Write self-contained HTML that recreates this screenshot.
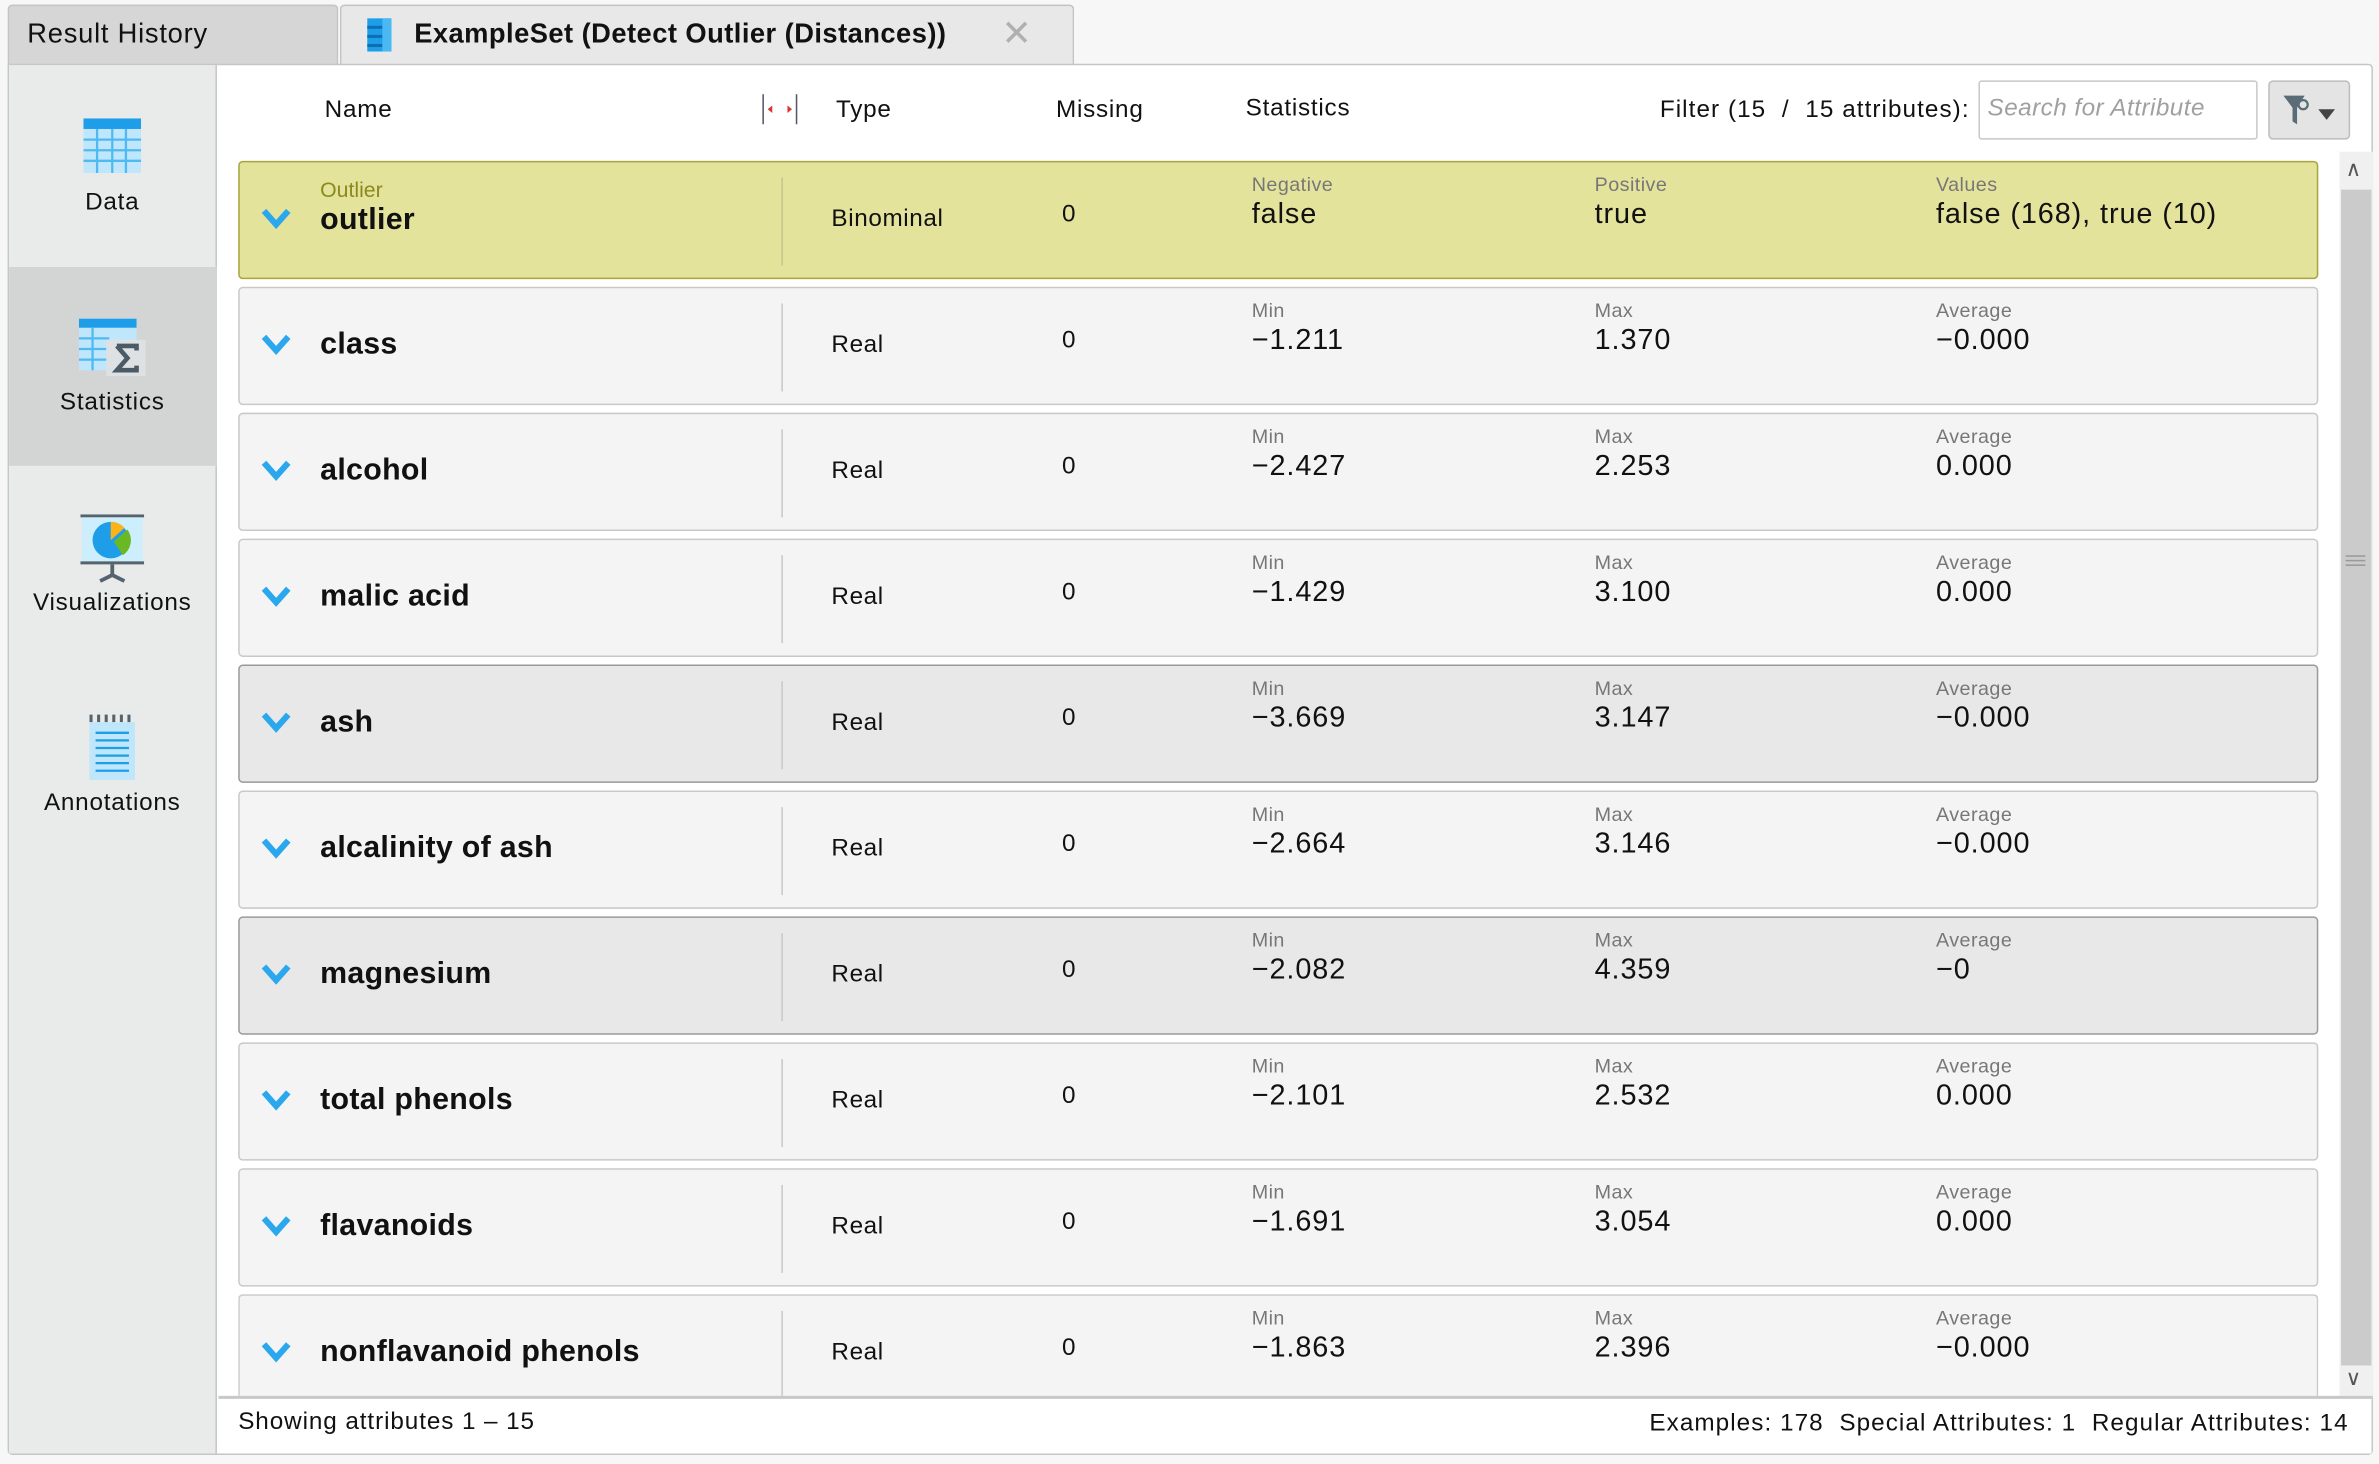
<!DOCTYPE html>
<html><head><meta charset="utf-8"><style>
*{box-sizing:border-box;margin:0;padding:0}
html,body{width:2379px;height:1464px;overflow:hidden;background:#f7f7f7;font-family:"Liberation Sans","DejaVu Sans",sans-serif;color:#111}
#s{position:absolute;left:0;top:0;width:1568px;height:965px;transform:scale(1.51722);transform-origin:0 0}
.a{position:absolute;white-space:nowrap}
.ls{letter-spacing:0.5px}
.row{position:absolute;left:157px;width:1371px;height:78px;background:#f4f4f4;border:1px solid #c9c9c9;border-radius:3px}
.row.d{background:#e8e8e8;border-color:#9a9a9a}
.row .chev{position:absolute;left:14px;top:30px}
.row .nm{position:absolute;left:53px;top:26px;font-size:20px;font-weight:bold;letter-spacing:0.2px}
.row .sep{position:absolute;left:357px;top:10px;width:1px;height:58px;background:#c8c8c8}
.row .ty{position:absolute;left:390px;top:29px;font-size:16px;letter-spacing:0.4px}
.row .mi{position:absolute;left:542px;top:26px;font-size:16px}
.row .l{position:absolute;top:7px;font-size:13px;color:#777;letter-spacing:0.3px}
.row .v{position:absolute;top:24px;font-size:19px;letter-spacing:0.6px}
</style></head><body><div id="s">
<div class="a" style="left:5px;top:3px;width:218px;height:40px;background:#d6d6d6;border:1px solid #c4c4c4;border-bottom:none;border-radius:3px 3px 0 0"></div>
<div class="a ls" style="left:18px;top:12px;font-size:18px">Result History</div>
<div class="a" style="left:224px;top:3px;width:484px;height:40px;background:#e8e8e8;border:1px solid #c4c4c4;border-bottom:none;border-radius:3px 3px 0 0"></div>
<svg class="a" style="left:242px;top:12px" width="16" height="22"><rect x="0" y="0" width="16" height="22" fill="#1e9ee8"/><rect x="0" y="5" width="10" height="2" fill="#0d6fb0"/><rect x="0" y="11" width="10" height="2" fill="#0d6fb0"/><rect x="0" y="17" width="10" height="2" fill="#0d6fb0"/><rect x="10" y="0" width="6" height="22" fill="#49b8f3"/></svg>
<div class="a" style="left:273px;top:12px;font-size:18px;font-weight:bold;letter-spacing:0.3px">ExampleSet (Detect Outlier (Distances))</div>
<div class="a" style="left:660px;top:8px;font-size:24px;color:#b0b0b0">✕</div>
<div class="a" style="left:5px;top:42px;width:1559px;height:917px;background:#fff;border:1px solid #c6c6c6;border-radius:0 3px 3px 3px"></div>
<div class="a" style="left:6px;top:43px;width:137px;height:915px;background:#e9eaea;border-right:1px solid #c6c6c6"></div>
<div class="a" style="left:6px;top:176px;width:137px;height:131px;background:#d3d4d4"></div>
<svg class="a" style="left:55px;top:78px" width="38" height="36"><rect width="38" height="36" fill="#bfe6fb"/><rect width="38" height="7" fill="#1e9ee8"/><g stroke="#4fbaf2" stroke-width="1.5"><line x1="0" y1="14" x2="38" y2="14"/><line x1="0" y1="21" x2="38" y2="21"/><line x1="0" y1="28" x2="38" y2="28"/><line x1="9" y1="7" x2="9" y2="36"/><line x1="19" y1="7" x2="19" y2="36"/><line x1="28" y1="7" x2="28" y2="36"/></g></svg>
<div class="a ls" style="left:0;width:148px;text-align:center;top:125px;font-size:16px">Data</div>
<svg class="a" style="left:52px;top:210px" width="44" height="38"><rect width="38" height="34" fill="#bfe6fb"/><rect width="38" height="6" fill="#1e9ee8"/><g stroke="#4fbaf2" stroke-width="1.5"><line x1="0" y1="13" x2="20" y2="13"/><line x1="0" y1="20" x2="20" y2="20"/><line x1="0" y1="27" x2="20" y2="27"/><line x1="9" y1="6" x2="9" y2="34"/></g><rect x="18" y="14" width="26" height="24" fill="#dde1e3"/><path d="M25 18 H38 V21 M25 18 L32 26 L25 34 H38 V31" stroke="#4a5a66" stroke-width="3" fill="none"/></svg>
<div class="a ls" style="left:0;width:148px;text-align:center;top:257px;font-size:16px">Statistics</div>
<svg class="a" style="left:53px;top:339px" width="42" height="45"><line x1="0" y1="1" x2="42" y2="1" stroke="#55636c" stroke-width="2"/><rect x="1" y="2" width="40" height="30" fill="#cdeefc"/><line x1="0" y1="32" x2="42" y2="32" stroke="#55636c" stroke-width="2"/><circle cx="20" cy="17" r="12" fill="#1e9ee8"/><path d="M20 17 L20 5 A12 12 0 0 1 29 9 Z" fill="#fbb315"/><path d="M22 18 L31 10 A12 12 0 0 1 28 27 Z" fill="#6ab824"/><path d="M21 33 V40 M13 44 L21 40 L29 44" stroke="#55636c" stroke-width="2.5" fill="none"/></svg>
<div class="a ls" style="left:0;width:148px;text-align:center;top:389px;font-size:16px">Visualizations</div>
<svg class="a" style="left:59px;top:470px" width="30" height="45"><g fill="#55636c"><rect x="0" y="1" width="2" height="5"/><rect x="5" y="1" width="2" height="5"/><rect x="10" y="1" width="2" height="5"/><rect x="15" y="1" width="2" height="5"/><rect x="20" y="1" width="2" height="5"/><rect x="25" y="1" width="2" height="5"/></g><rect x="0" y="6" width="30" height="38" fill="#bfe6fb"/><g stroke="#1e9ee8" stroke-width="1.5"><line x1="4" y1="13" x2="26" y2="13"/><line x1="4" y1="18" x2="26" y2="18"/><line x1="4" y1="23" x2="26" y2="23"/><line x1="4" y1="28" x2="26" y2="28"/><line x1="4" y1="33" x2="26" y2="33"/><line x1="4" y1="38" x2="26" y2="38"/></g></svg>
<div class="a ls" style="left:0;width:148px;text-align:center;top:521px;font-size:16px">Annotations</div>
<div class="a ls" style="left:214px;top:64px;font-size:16px">Name</div>
<svg class="a" style="left:502px;top:62px" width="24" height="20"><line x1="1" y1="0" x2="1" y2="20" stroke="#556" stroke-width="1"/><line x1="23" y1="0" x2="23" y2="20" stroke="#556" stroke-width="1"/><path d="M4 10 L7 7.5 V12.5Z M20 10 L17 7.5 V12.5Z" fill="#d33"/></svg>
<div class="a ls" style="left:551px;top:64px;font-size:16px">Type</div>
<div class="a ls" style="left:696px;top:64px;font-size:16px">Missing</div>
<div class="a ls" style="left:821px;top:63px;font-size:16px">Statistics</div>
<div class="a" style="left:1094px;top:64px;font-size:16px;letter-spacing:0.7px">Filter (15&nbsp; / &nbsp;15 attributes):</div>
<div class="a" style="left:1304px;top:53px;width:184px;height:39px;border:1px solid #c8c8c8;border-radius:2px;background:#fff"></div>
<div class="a" style="left:1310px;top:63px;font-size:16px;font-style:italic;color:#a0a0a0;letter-spacing:0.3px">Search for Attribute</div>
<div class="a" style="left:1495px;top:53px;width:54px;height:39px;border:1px solid #bdbdbd;border-radius:3px;background:#e4e4e4"></div>
<svg class="a" style="left:1503px;top:62px" width="40" height="22"><path d="M2 1 H16 L11 9 V20 L8 18 V9 Z" fill="#5a6c78"/><circle cx="15" cy="7" r="3" fill="none" stroke="#5a6c78" stroke-width="1.5"/><path d="M25 10 H36 L30.5 17Z" fill="#444"/></svg>
<div class="a" style="left:1542px;top:100px;width:22px;height:820px;background:#f0f0f0"></div>
<div class="a" style="left:1543px;top:125px;width:20px;height:775px;background:#cbcbcb"></div>
<div class="a" style="left:1546px;top:103px;font-size:14px;color:#555">∧</div>
<div class="a" style="left:1546px;top:900px;font-size:14px;color:#555">∨</div>
<div class="a" style="left:1546px;top:366px;width:13px;height:1px;background:#999;box-shadow:0 3px #999,0 6px #999"></div>
<div class="row" style="top:106px;background:#e4e39c;border-color:#a9a53a;border-width:1.5px">
 <svg class="chev" width="20" height="14"><path d="M2 2 L10 11 L18 2" stroke="#2ba7ee" stroke-width="4" fill="none"/></svg>
 <div class="a" style="left:53px;top:10px;font-size:14px;color:#8a8a1c">Outlier</div>
 <div class="nm" style="top:27px">outlier</div><div class="sep" style="background:#c8c68a"></div>
 <div class="ty">Binominal</div><div class="mi">0</div>
 <div class="l" style="left:667px">Negative</div><div class="v" style="left:667px">false</div>
 <div class="l" style="left:893px">Positive</div><div class="v" style="left:893px">true</div>
 <div class="l" style="left:1118px">Values</div><div class="v" style="left:1118px">false (168), true (10)</div>
</div>
<div class="row" style="top:189px"><svg class="chev" width="20" height="14"><path d="M2 2 L10 11 L18 2" stroke="#2ba7ee" stroke-width="4" fill="none"/></svg><div class="nm">class</div><div class="sep"></div><div class="ty">Real</div><div class="mi">0</div><div class="l" style="left:667px">Min</div><div class="v" style="left:667px">−1.211</div><div class="l" style="left:893px">Max</div><div class="v" style="left:893px">1.370</div><div class="l" style="left:1118px">Average</div><div class="v" style="left:1118px">−0.000</div></div>
<div class="row" style="top:272px"><svg class="chev" width="20" height="14"><path d="M2 2 L10 11 L18 2" stroke="#2ba7ee" stroke-width="4" fill="none"/></svg><div class="nm">alcohol</div><div class="sep"></div><div class="ty">Real</div><div class="mi">0</div><div class="l" style="left:667px">Min</div><div class="v" style="left:667px">−2.427</div><div class="l" style="left:893px">Max</div><div class="v" style="left:893px">2.253</div><div class="l" style="left:1118px">Average</div><div class="v" style="left:1118px">0.000</div></div>
<div class="row" style="top:355px"><svg class="chev" width="20" height="14"><path d="M2 2 L10 11 L18 2" stroke="#2ba7ee" stroke-width="4" fill="none"/></svg><div class="nm">malic acid</div><div class="sep"></div><div class="ty">Real</div><div class="mi">0</div><div class="l" style="left:667px">Min</div><div class="v" style="left:667px">−1.429</div><div class="l" style="left:893px">Max</div><div class="v" style="left:893px">3.100</div><div class="l" style="left:1118px">Average</div><div class="v" style="left:1118px">0.000</div></div>
<div class="row d" style="top:438px"><svg class="chev" width="20" height="14"><path d="M2 2 L10 11 L18 2" stroke="#2ba7ee" stroke-width="4" fill="none"/></svg><div class="nm">ash</div><div class="sep"></div><div class="ty">Real</div><div class="mi">0</div><div class="l" style="left:667px">Min</div><div class="v" style="left:667px">−3.669</div><div class="l" style="left:893px">Max</div><div class="v" style="left:893px">3.147</div><div class="l" style="left:1118px">Average</div><div class="v" style="left:1118px">−0.000</div></div>
<div class="row" style="top:521px"><svg class="chev" width="20" height="14"><path d="M2 2 L10 11 L18 2" stroke="#2ba7ee" stroke-width="4" fill="none"/></svg><div class="nm">alcalinity of ash</div><div class="sep"></div><div class="ty">Real</div><div class="mi">0</div><div class="l" style="left:667px">Min</div><div class="v" style="left:667px">−2.664</div><div class="l" style="left:893px">Max</div><div class="v" style="left:893px">3.146</div><div class="l" style="left:1118px">Average</div><div class="v" style="left:1118px">−0.000</div></div>
<div class="row d" style="top:604px"><svg class="chev" width="20" height="14"><path d="M2 2 L10 11 L18 2" stroke="#2ba7ee" stroke-width="4" fill="none"/></svg><div class="nm">magnesium</div><div class="sep"></div><div class="ty">Real</div><div class="mi">0</div><div class="l" style="left:667px">Min</div><div class="v" style="left:667px">−2.082</div><div class="l" style="left:893px">Max</div><div class="v" style="left:893px">4.359</div><div class="l" style="left:1118px">Average</div><div class="v" style="left:1118px">−0</div></div>
<div class="row" style="top:687px"><svg class="chev" width="20" height="14"><path d="M2 2 L10 11 L18 2" stroke="#2ba7ee" stroke-width="4" fill="none"/></svg><div class="nm">total phenols</div><div class="sep"></div><div class="ty">Real</div><div class="mi">0</div><div class="l" style="left:667px">Min</div><div class="v" style="left:667px">−2.101</div><div class="l" style="left:893px">Max</div><div class="v" style="left:893px">2.532</div><div class="l" style="left:1118px">Average</div><div class="v" style="left:1118px">0.000</div></div>
<div class="row" style="top:770px"><svg class="chev" width="20" height="14"><path d="M2 2 L10 11 L18 2" stroke="#2ba7ee" stroke-width="4" fill="none"/></svg><div class="nm">flavanoids</div><div class="sep"></div><div class="ty">Real</div><div class="mi">0</div><div class="l" style="left:667px">Min</div><div class="v" style="left:667px">−1.691</div><div class="l" style="left:893px">Max</div><div class="v" style="left:893px">3.054</div><div class="l" style="left:1118px">Average</div><div class="v" style="left:1118px">0.000</div></div>
<div class="row" style="top:853px;height:70px;border-bottom:none;border-radius:3px 3px 0 0"><svg class="chev" width="20" height="14"><path d="M2 2 L10 11 L18 2" stroke="#2ba7ee" stroke-width="4" fill="none"/></svg><div class="nm">nonflavanoid phenols</div><div class="sep"></div><div class="ty">Real</div><div class="mi">0</div><div class="l" style="left:667px">Min</div><div class="v" style="left:667px">−1.863</div><div class="l" style="left:893px">Max</div><div class="v" style="left:893px">2.396</div><div class="l" style="left:1118px">Average</div><div class="v" style="left:1118px">−0.000</div></div>
<div class="a" style="left:144px;top:920px;width:1419px;height:38px;background:#fff;border-top:2px solid #c8c8c8"></div>
<div class="a" style="left:157px;top:929px;font-size:16px;letter-spacing:0.6px">Showing attributes 1 – 15</div>
<div class="a" style="right:20px;top:930px;font-size:16px;letter-spacing:0.7px">Examples: 178&nbsp;&nbsp;Special Attributes: 1&nbsp;&nbsp;Regular Attributes: 14</div>
</div></body></html>
